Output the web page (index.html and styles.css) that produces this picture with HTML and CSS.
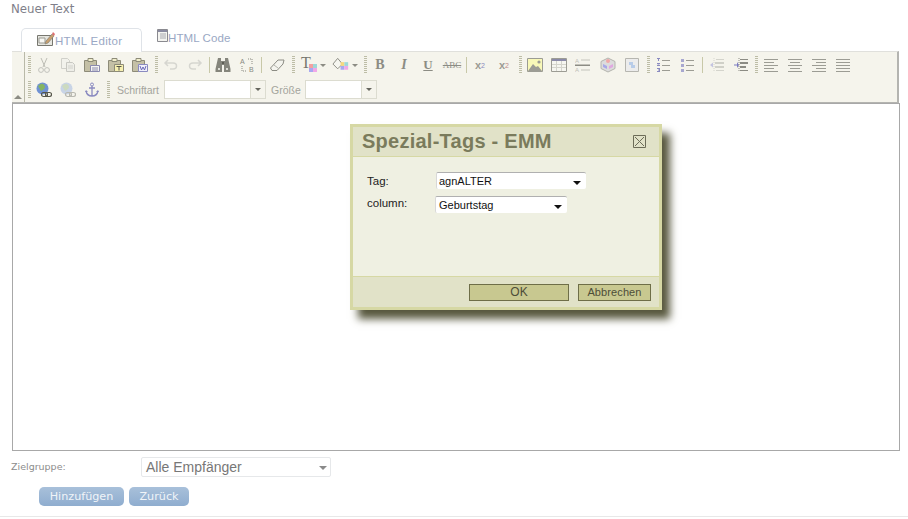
FILE: index.html
```html
<!DOCTYPE html>
<html lang="de">
<head>
    <meta charset="UTF-8">
    <meta name="viewport" content="width=device-width, initial-scale=1.0">
    <title>Neuer Text</title>
    <link rel="stylesheet" href="styles.css">
</head>
<body>

<svg class="defs" width="0" height="0">
    <symbol id="i-cut" viewBox="0 0 16 16"><path d="M5 1l4 9M11 1L7 10" stroke="#bdbdb5" fill="none"/><circle cx="5" cy="13" r="2.4" fill="none" stroke="#c2c2bc"/><circle cx="11" cy="13" r="2.4" fill="none" stroke="#c2c2bc"/></symbol>
    <symbol id="i-copy" viewBox="0 0 16 16"><path d="M1.500 1.500h6l2 2v8h-8z" fill="#f2f2ec" stroke="#d0d0ca"/><path d="M6.500 5.500h6l2 2v7h-8z" fill="#eeeee8" stroke="#c8c8c2"/><path d="M8 9h5M8 11h5" stroke="#d2d2cc"/></symbol>
    <symbol id="i-paste" viewBox="0 0 16 16"><path d="M.500 3.500h12v11H.500z" fill="#c4c0a6" stroke="#8d8b78"/><path d="M4 1.500h5v3H4z" fill="#f0eecb" stroke="#8d8b78"/><path d="M6.500 8.500h9v6h-9z" fill="#f5f5f0" stroke="#8a8ab0"/><path d="M8 11h6M8 13h6" stroke="#8a8ab0"/></symbol>
    <symbol id="i-paste-t" viewBox="0 0 16 16"><path d="M.500 3.500h12v11H.500z" fill="#c4c0a6" stroke="#8d8b78"/><path d="M4 1.500h5v3H4z" fill="#f0eecb" stroke="#8d8b78"/><path d="M6.500 7.500h9v7h-9z" fill="#f6f0b0" stroke="#8d8b78"/><path d="M8.500 9.500h5M11 9.500v4" stroke="#55554a"/></symbol>
    <symbol id="i-paste-w" viewBox="0 0 16 16"><path d="M.500 3.500h12v11H.500z" fill="#c4c0a6" stroke="#8d8b78"/><path d="M4 1.500h5v3H4z" fill="#f0eecb" stroke="#8d8b78"/><path d="M6.500 7.500h9v7h-9z" fill="#f0f0fa" stroke="#8a8ac0"/><path d="M8 9l1.500 4 1.500-3 1.500 3L14 9" fill="none" stroke="#6a6ab8"/></symbol>
    <symbol id="i-undo" viewBox="0 0 16 16"><path d="M5 3L2 6l3 3M2.500 6H10q3.500 0 3.500 3t-3.500 3H7" fill="none" stroke="#d6d6d0" stroke-width="1.500"/></symbol>
    <symbol id="i-redo" viewBox="0 0 16 16"><path d="M11 3l3 3-3 3M13.500 6H6Q2.500 6 2.500 9T6 12h3" fill="none" stroke="#d6d6d0" stroke-width="1.500"/></symbol>
    <symbol id="i-find" viewBox="0 0 16 16"><path d="M3 1h3v3h4V1h3l2.500 11v3H9V8H7v7H.500v-3z" fill="#85857c"/><path d="M3 11h2v2H3zM11 11h2v2h-2z" fill="#dcdcd4"/><path d="M7 5h2v2H7z" fill="#5e5e56"/></symbol>
    <symbol id="i-erase" viewBox="0 0 16 16"><path d="M1.500 11L9 3h6L14 7l-6 6.500H3z" fill="#f4f4ee" stroke="#8c8c84"/><path d="M5 8l4 3" stroke="#b4b4ac"/></symbol>
    <symbol id="i-image" viewBox="0 0 16 16"><path d="M.500 1.500h15v13H.500z" fill="#f8f8b8" stroke="#9c9c94"/><path d="M1 14l5-7 3 3 2-1 4 5z" fill="#9c9c94"/><circle cx="12" cy="5" r="1.600" fill="#9c9c94"/></symbol>
    <symbol id="i-table" viewBox="0 0 16 16"><path d="M.500 1.500h15v13H.500z" fill="#f6f6f0" stroke="#9c9c94"/><path d="M1 2h14v2H1z" fill="#8a8aa8"/><path d="M1 7.500h14M1 10.500h14M5.500 4v10M10.500 4v10" stroke="#d4d4cc"/></symbol>
    <symbol id="i-box" viewBox="0 0 16 16"><path d="M8 1l7 3.500v7L8 15l-7-3.500v-7z" fill="#dcdcdc" stroke="#b4b4ae"/><circle cx="8" cy="4" r="2" fill="#f0a8a8"/><path d="M3 7l4 2v3l-4-2z" fill="#a8a8e8"/><path d="M13 7l-4 2v3l4-2z" fill="#e0a8e0"/></symbol>
    <symbol id="i-flash" viewBox="0 0 16 16"><path d="M1.500 1.500h13v13h-13z" fill="#ececec" stroke="#b6b6b0"/><path d="M5 5h4v3h2v3H7V8H5z" fill="#b8cce8"/></symbol>
    <symbol id="i-ol" viewBox="0 0 16 16"><path d="M1 1h3v1H3v2H2V2H1zM1 6h3v1L2 8h2v1H1V8l2-1H1zM1 11h3v4H1v-1h2v-.500H2v-1h1V12H1z" fill="#8a8ac0"/><path d="M6 3h8v1H6zM6 8h8v1H6zM6 13h8v1H6z" fill="#9c9c94"/></symbol>
    <symbol id="i-ul" viewBox="0 0 16 16"><path d="M1 2h3v3H1zM1 7h3v3H1zM1 12h3v3H1z" fill="#a8a8d0"/><path d="M6 3h8v1H6zM6 8h8v1H6zM6 13h8v1H6z" fill="#9c9c94"/></symbol>
    <symbol id="i-outdent" viewBox="0 0 16 16"><path d="M7 2h8v1H7zM7 13h8v1H7z" fill="#d4d4cc"/><path d="M6 5h9v2H6zM6 9h9v2H6z" fill="#d0d0c8"/><path d="M1 8l3-2.500v5z" fill="#c4c4e0"/><path d="M5 1v14" stroke="#d4d4cc" stroke-dasharray="1 1"/></symbol>
    <symbol id="i-indent" viewBox="0 0 16 16"><path d="M7 2h8v1H7zM7 13h8v1H7z" fill="#8c8c84"/><path d="M7 5h8v2H7zM7 9h6v2H7z" fill="#8c8c84"/><path d="M1 7.500h3V5l2 3-2 3V8.500H1z" fill="#7a7ac0"/><path d="M6 1v14" stroke="#8c8c84" stroke-dasharray="1 1"/></symbol>
    <symbol id="i-left" viewBox="0 0 16 16"><path d="M1 2h14v1H1zM1 5h10v1H1zM1 8h14v1H1zM1 11h10v1H1zM1 14h14v1H1z" fill="#9c9c94"/></symbol>
    <symbol id="i-center" viewBox="0 0 16 16"><path d="M1 2h14v1H1zM3 5h10v1H3zM1 8h14v1H1zM3 11h10v1H3zM1 14h14v1H1z" fill="#9c9c94"/></symbol>
    <symbol id="i-right" viewBox="0 0 16 16"><path d="M1 2h14v1H1zM5 5h10v1H5zM1 8h14v1H1zM5 11h10v1H5zM1 14h14v1H1z" fill="#9c9c94"/></symbol>
    <symbol id="i-justify" viewBox="0 0 16 16"><path d="M1 2h14v1H1zM1 5h14v1H1zM1 8h14v1H1zM1 11h14v1H1zM1 14h14v1H1z" fill="#9c9c94"/></symbol>
    <symbol id="i-link" viewBox="0 0 16 16"><circle cx="6.500" cy="6.500" r="6" fill="#7092d4"/><path d="M2 4q3-3 5-2t2 3-4 4z" fill="#84b462"/><rect x="5.500" y="10.500" width="6" height="4" rx="2" fill="none" stroke="#55554a" stroke-width="1.200"/><rect x="9.500" y="10.500" width="6" height="4" rx="2" fill="none" stroke="#55554a" stroke-width="1.200"/></symbol>
    <symbol id="i-unlink" viewBox="0 0 16 16"><circle cx="6.500" cy="6.500" r="6" fill="#c8d4e6"/><path d="M2 4q3-3 5-2t2 3-4 4z" fill="#ccdac0"/><rect x="5.500" y="10.500" width="6" height="4" rx="2" fill="none" stroke="#b8b8b0" stroke-width="1.200"/><rect x="9.500" y="10.500" width="6" height="4" rx="2" fill="none" stroke="#b8b8b0" stroke-width="1.200"/></symbol>
    <symbol id="i-anchor" viewBox="0 0 16 16"><circle cx="8" cy="2.500" r="1.500" fill="none" stroke="#8a8ac0"/><path d="M8 4v10M5 6h6M2 9q1 5 6 5t6-5" fill="none" stroke="#8a8ac0" stroke-width="1.300"/><path d="M1 10l1-2 2 2zM15 10l-1-2-2 2z" fill="#8a8ac0"/></symbol>
    <symbol id="i-tab-editor" viewBox="0 0 18 16"><path d="M.500 4.500h15v10H.500z" fill="#e6e6e0" stroke="#77776f"/><path d="M2 7h6v5H2z" fill="#f8f8f4" stroke="#9a9a92"/><path d="M9 10l6-7 2 2-6 7-3 1z" fill="#c8a070" stroke="#77776f" stroke-width=".6"/><path d="M15 3l1-2 2 2-1 2z" fill="#e07070"/></symbol>
    <symbol id="i-tab-code" viewBox="0 0 11 13"><path d="M.500 .500h10v12H.500z" fill="#f4f4f0" stroke="#8a8a90"/><path d="M1 1h9v2H1z" fill="#8a8aa0"/><path d="M3 5h6M3 7h6M3 9h6" stroke="#a8a8b0"/></symbol>
</svg>

<div class="page">
    <div class="page-title">Neuer Text</div>

    <div class="tabs">
        <div class="tab tab-active">
            <svg class="tab-ico-editor"><use href="#i-tab-editor"/></svg>HTML Editor
        </div>
        <div class="tab tab-code">
            <svg class="tab-ico-code"><use href="#i-tab-code"/></svg>HTML Code
        </div>
    </div>

    <div class="toolbar">
        <div class="tb-collapse"><span class="tb-arrow"></span></div>
        <div class="tb-rows">
            <div class="tb-row">
                <span class="grip"></span>
                <span class="btn"><svg class="ico"><use href="#i-cut"/></svg></span>
                <span class="btn"><svg class="ico"><use href="#i-copy"/></svg></span>
                <span class="btn"><svg class="ico"><use href="#i-paste"/></svg></span>
                <span class="btn"><svg class="ico"><use href="#i-paste-t"/></svg></span>
                <span class="btn"><svg class="ico"><use href="#i-paste-w"/></svg></span>
                <span class="grip grip-gap"></span>
                <span class="btn"><svg class="ico"><use href="#i-undo"/></svg></span>
                <span class="btn"><svg class="ico"><use href="#i-redo"/></svg></span>
                <span class="sep"></span>
                <span class="btn"><svg class="ico"><use href="#i-find"/></svg></span>
                <span class="btn">
                    <svg class="ico" viewBox="0 0 16 16"><text x="1" y="7" class="ico-text">A</text><text x="10" y="15" class="ico-text">B</text><path d="M9 2h4v5M3 9v5h5" fill="none" stroke="#8a8a82" stroke-dasharray="1 1"/></svg>
                </span>
                <span class="sep"></span>
                <span class="btn btn-shift"><svg class="ico"><use href="#i-erase"/></svg></span>
                <span class="grip"></span>
                <span class="btn-color">
                    <span class="fore-t">T</span>
                    <svg class="swatch swatch-fore" viewBox="0 0 8 8"><path d="M0 0h4v4H0z" fill="#f4a0a0"/><path d="M4 0h4v4H4z" fill="#9ed8d8"/><path d="M0 4h4v4H0z" fill="#a8a8f0"/><path d="M4 4h4v4H4z" fill="#f0a8e8"/></svg>
                    <i class="caret"></i>
                </span>
                <span class="btn-color">
                    <svg class="ico-wide" viewBox="0 0 20 16"><path d="M1 7l5-6 5 6-5 5z" fill="#f6f6f0" stroke="#8a8a82"/><path d="M9 5h4v4H9z" fill="#f6d880"/><path d="M13 5h4v4h-4z" fill="#9ed8d8"/><path d="M9 9h4v4H9z" fill="#a8a8f0"/><path d="M13 9h4v4h-4z" fill="#f0a8e8"/></svg>
                    <i class="caret"></i>
                </span>
                <span class="grip grip-gap2"></span>
                <span class="btn txt txt-b">B</span>
                <span class="btn txt txt-i">I</span>
                <span class="btn txt txt-u">U</span>
                <span class="btn txt txt-s">ABC</span>
                <span class="sep"></span>
                <span class="btn txt txt-sub">x<sub>2</sub></span>
                <span class="btn txt txt-sup">x<sup>2</sup></span>
                <span class="grip grip-gap"></span>
                <span class="btn"><svg class="ico"><use href="#i-image"/></svg></span>
                <span class="btn"><svg class="ico"><use href="#i-table"/></svg></span>
                <span class="btn">
                    <svg class="ico" viewBox="0 0 16 16"><text x="0" y="5.500" class="ico-small">A</text><text x="0" y="15" class="ico-small">A</text><path d="M6 3h9M6 13h9" stroke="#c4c4bc"/><path d="M0 7.500h15v1.500H0z" fill="#8c8c84"/></svg>
                </span>
                <span class="btn btn-shift1"><svg class="ico"><use href="#i-box"/></svg></span>
                <span class="btn"><svg class="ico"><use href="#i-flash"/></svg></span>
                <span class="grip"></span>
                <span class="btn btn-shift1"><svg class="ico"><use href="#i-ol"/></svg></span>
                <span class="btn"><svg class="ico"><use href="#i-ul"/></svg></span>
                <span class="sep"></span>
                <span class="btn btn-shift1"><svg class="ico"><use href="#i-outdent"/></svg></span>
                <span class="btn"><svg class="ico"><use href="#i-indent"/></svg></span>
                <span class="grip grip-tight"></span>
                <span class="btn"><svg class="ico"><use href="#i-left"/></svg></span>
                <span class="btn"><svg class="ico"><use href="#i-center"/></svg></span>
                <span class="btn"><svg class="ico"><use href="#i-right"/></svg></span>
                <span class="btn"><svg class="ico"><use href="#i-justify"/></svg></span>
            </div>
            <div class="tb-row">
                <span class="grip"></span>
                <span class="btn"><svg class="ico"><use href="#i-link"/></svg></span>
                <span class="btn"><svg class="ico"><use href="#i-unlink"/></svg></span>
                <span class="btn"><svg class="ico"><use href="#i-anchor"/></svg></span>
                <span class="grip"></span>
                <span class="tb-label tb-label-font">Schriftart</span>
                <span class="combo combo-font"><span class="combo-arrow"></span></span>
                <span class="tb-label tb-label-size">Größe</span>
                <span class="combo combo-size"><span class="combo-arrow"></span></span>
            </div>
        </div>
    </div>

    <div class="editor"></div>

    <div class="target-row">
        <label class="target-label">Zielgruppe:</label>
        <div class="target-select">Alle Empfänger<span class="target-arrow"></span></div>
    </div>

    <div class="actions">
        <button class="action">Hinzufügen</button>
        <button class="action action-back">Zurück</button>
    </div>

    <div class="page-end"></div>
</div>

<div class="dialog">
    <div class="dialog-head">
        <span class="dialog-title">Spezial-Tags - EMM</span>
        <span class="dialog-close"><svg class="close-ico" viewBox="0 0 13 13"><path d="M.500 .500h12v12H.500zM2 2l9 9M11 2l-9 9" fill="none" stroke="#6c6c58"/></svg></span>
    </div>
    <div class="dialog-body">
        <div class="field field-tag">
            <span class="field-label">Tag:</span>
            <span class="pick pick-tag">agnALTER<i class="pick-arrow"></i></span>
        </div>
        <div class="field field-col">
            <span class="field-label">column:</span>
            <span class="pick pick-col">Geburtstag<i class="pick-arrow"></i></span>
        </div>
    </div>
    <div class="dialog-foot">
        <button class="dlg-btn dlg-ok">OK</button>
        <button class="dlg-btn dlg-cancel">Abbrechen</button>
    </div>
</div>

</body>
</html>
```

FILE: styles.css
```css
* {
    box-sizing: border-box;
    margin: 0;
    padding: 0;
}
body {
    font-family: 'DejaVu Sans', sans-serif;
    font-size: 11px;
    background-color: #fff;
    overflow: hidden;
    height: 519px;
}
.defs {
    position: absolute;
}
.ico-text {
    font: 7px 'Liberation Sans', sans-serif;
    fill: #8a8a82;
}
.ico-small {
    font: 6px 'Liberation Sans', sans-serif;
    fill: #c0c0b8;
}
.page {
    padding: 3px 9px 0 11px;
}
.page-title {
    color: #7f7f8a;
    font-size: 11.800px;
    line-height: 13px;
}

/* tabs */
.tabs {
    display: flex;
    margin: 12px 0 0 10px;
    height: 23px;
}
.tab {
    width: 121px;
    height: 24px;
    padding: 0 0 0 15px;
    color: #9aa8c4;
    font-size: 11.500px;
    font-family: 'Liberation Sans', sans-serif;
    white-space: nowrap;
    letter-spacing: .3px;
}
.tab-active {
    border: 1px solid #dfe3e8;
    border-bottom: none;
    border-radius: 5px 5px 0 0;
    background-color: #fff;
    padding-top: 2px;
    position: relative;
    z-index: 1;
}
.tab-ico-editor {
    width: 18px;
    height: 16px;
    vertical-align: -2px;
}
.tab-ico-code {
    width: 11px;
    height: 13px;
    vertical-align: 0;
}
.tab-code {
    line-height: 20px;
    letter-spacing: .1px;
}

/* toolbar */
.toolbar {
    display: flex;
    margin-left: 1px;
    width: 887px;
    height: 52px;
    background-color: #f5f4ec;
    border-top: 1px solid #e0e0dc;
    border-right: 2px solid #b4b4b0;
    border-bottom: 1px solid #b4b4b0;
}
.tb-collapse {
    width: 13px;
    border-right: 1px solid #b9b9a8;
    display: flex;
    align-items: flex-end;
    justify-content: center;
    padding-bottom: 3px;
}
.tb-arrow {
    border-left: 4px solid transparent;
    border-right: 4px solid transparent;
    border-bottom: 4px solid #8c8c84;
}
.tb-rows {
    flex: 1;
    display: flex;
    flex-direction: column;
    padding-top: 1px;
}
.tb-row {
    display: flex;
    align-items: center;
    height: 25px;
}
.tb-row + .tb-row {
    height: 26px;
}
.grip {
    flex: none;
    width: 6px;
    height: 18px;
    margin: 0 0 0 1px;
    background-image: repeating-linear-gradient(to bottom, #bdbda6 0, #bdbda6 1px, transparent 1px, transparent 2px);
    background-size: 3px 100%;
    background-repeat: no-repeat;
    background-position: center;
}
.btn {
    flex: none;
    width: 24px;
    height: 20px;
    display: flex;
    align-items: center;
    justify-content: center;
}
.btn-shift {
    margin-left: 2px;
}
.btn-shift1 {
    margin-left: 1px;
}
.grip-gap {
    margin-left: 1px;
}
.grip-gap2 {
    margin-left: 4px;
}
.grip-tight {
    margin-left: 0;
}
.ico {
    width: 16px;
    height: 16px;
}
.ico-wide {
    width: 20px;
    height: 16px;
}
.btn-color {
    flex: none;
    width: 31px;
    height: 20px;
    display: flex;
    align-items: center;
    padding-left: 5px;
}
.fore-t {
    width: 10px;
    color: #77776f;
    font-family: 'Liberation Serif', serif;
    font-size: 16px;
    line-height: 16px;
    margin-top: -4px;
}
.swatch {
    width: 8px;
    height: 8px;
}
.swatch-fore {
    margin: 6px 2px 0 -2px;
}
.caret {
    margin-left: 1px;
    border-left: 3px solid transparent;
    border-right: 3px solid transparent;
    border-top: 3px solid #8c8c84;
}
.sep {
    flex: none;
    width: 4px;
    height: 16px;
    background: linear-gradient(#c8c8a8, #c8c8a8) center / 1px 100% no-repeat;
}
.txt {
    color: #8c8c84;
    font-family: 'Liberation Serif', serif;
}
.txt-b {
    font-weight: bold;
    font-size: 14px;
}
.txt-i {
    font-style: italic;
    font-weight: bold;
    font-size: 14px;
}
.txt-u {
    font-weight: bold;
    font-size: 13px;
    text-decoration: underline;
}
.txt-s {
    font-size: 9px;
    text-decoration: line-through;
}
.txt-sub,
.txt-sup {
    font-size: 11px;
    font-family: 'Liberation Sans', sans-serif;
    font-weight: bold;
    color: #9c9c94;
}
.txt-sub sub {
    font-size: 7px;
    color: #8a8ac0;
    font-weight: normal;
}
.txt-sup sup {
    font-size: 7px;
    color: #c08a8a;
    font-weight: normal;
}
.tb-label {
    color: #a4a49c;
    font-size: 10.500px;
    font-family: 'Liberation Sans', sans-serif;
    white-space: nowrap;
}
.tb-label-font {
    margin-left: 6px;
    width: 47px;
}
.tb-label-size {
    margin-left: 5px;
    width: 34px;
}
.combo {
    flex: none;
    height: 19px;
    border: 1px solid #dcdcd0;
    background: linear-gradient(to right, #fff, #fff) left / calc(100% - 15px) 100% no-repeat #f5f4ec;
    display: flex;
    justify-content: flex-end;
    align-items: center;
}
.combo-font {
    width: 102px;
}
.combo-size {
    width: 72px;
}
.combo-arrow {
    width: 15px;
    height: 100%;
    border-left: 1px solid #dcdcd0;
    position: relative;
}
.combo-arrow::after {
    content: "";
    position: absolute;
    left: 4px;
    top: 7px;
    border-left: 3px solid transparent;
    border-right: 3px solid transparent;
    border-top: 3px solid #66665e;
}

/* editor */
.editor {
    margin-left: 1px;
    width: 888px;
    height: 348px;
    background-color: #fff;
    border: 1px solid #a8a8a8;
}

/* audience row */
.target-row {
    display: flex;
    align-items: flex-start;
    margin-top: 6px;
}
.target-label {
    width: 130px;
    color: #8c8c8c;
    font-size: 9.500px;
    line-height: 20px;
}
.target-select {
    position: relative;
    width: 190px;
    height: 20px;
    padding-left: 4px;
    border: 1px solid #e6e8ea;
    border-radius: 2px;
    color: #777;
    font-family: 'Liberation Sans', sans-serif;
    font-size: 14px;
    line-height: 19px;
}
.target-arrow {
    position: absolute;
    right: 3px;
    top: 8px;
    border-left: 4px solid transparent;
    border-right: 4px solid transparent;
    border-top: 4px solid #8a8a8a;
}

/* buttons */
.actions {
    display: flex;
    gap: 5px;
    margin: 10px 0 0 28px;
}
.action {
    width: 85px;
    height: 19px;
    border: none;
    border-radius: 5px;
    background: linear-gradient(#a8c0da, #8fadcf);
    color: #f0f4f8;
    font-family: 'DejaVu Sans', sans-serif;
    font-size: 11.200px;
}
.action-back {
    width: 60px;
}
.page-end {
    margin: 10px -9px 0 -11px;
    border-top: 1px solid #e8e8e8;
}

/* dialog */
.dialog {
    position: absolute;
    left: 350px;
    top: 124px;
    width: 312px;
    height: 186px;
    display: flex;
    flex-direction: column;
    border: 3px solid #d6d8a4;
    background-color: #eff0e2;
    box-shadow: 8px 9px 8px #58583e;
    font-family: 'Liberation Sans', sans-serif;
}
.dialog-head {
    flex: none;
    height: 30px;
    display: flex;
    align-items: center;
    justify-content: space-between;
    padding: 0 13px 0 9px;
    background-color: #e1e2c8;
    border-bottom: 1px solid #d6d8a4;
}
.dialog-title {
    color: #7a7b5c;
    font-size: 20px;
    font-weight: bold;
    letter-spacing: .25px;
}
.close-ico {
    display: block;
    width: 13px;
    height: 13px;
}
.dialog-body {
    flex: 1;
    padding: 15px 0 0 14px;
}
.field {
    display: flex;
    height: 24px;
    align-items: flex-start;
    color: #222;
    font-size: 11.500px;
}
.field-label {
    width: 69px;
    line-height: 18px;
}
.field-col .field-label {
    line-height: 15px;
}
.pick {
    position: relative;
    height: 17px;
    padding-left: 3px;
    background-color: #fff;
    border-top: 1px solid #b0b0b0;
    border-left: 1px solid #d8d8d8;
    border-radius: 2px;
    line-height: 16px;
    font-size: 11px;
    color: #111;
}
.pick-tag {
    width: 150px;
    padding-left: 2px;
}
.pick-col {
    width: 132px;
    margin-left: -1px;
}
.pick-arrow {
    position: absolute;
    right: 5px;
    top: 8px;
    border-left: 4px solid transparent;
    border-right: 4px solid transparent;
    border-top: 4px solid #111;
}
.dialog-foot {
    flex: none;
    height: 31px;
    display: flex;
    justify-content: flex-end;
    align-items: center;
    gap: 9px;
    padding: 0 8px 0 0;
    background-color: #e1e2c8;
    border-top: 1px solid #d6d8a4;
}
.dlg-btn {
    height: 17px;
    background-color: #c8c890;
    border: 1px solid #6e6e48;
    color: #4d4d38;
    font-family: 'Liberation Sans', sans-serif;
    font-size: 11px;
    letter-spacing: .1px;
}
.dlg-ok {
    width: 100px;
    font-size: 12px;
}
.dlg-cancel {
    width: 73px;
}
```
